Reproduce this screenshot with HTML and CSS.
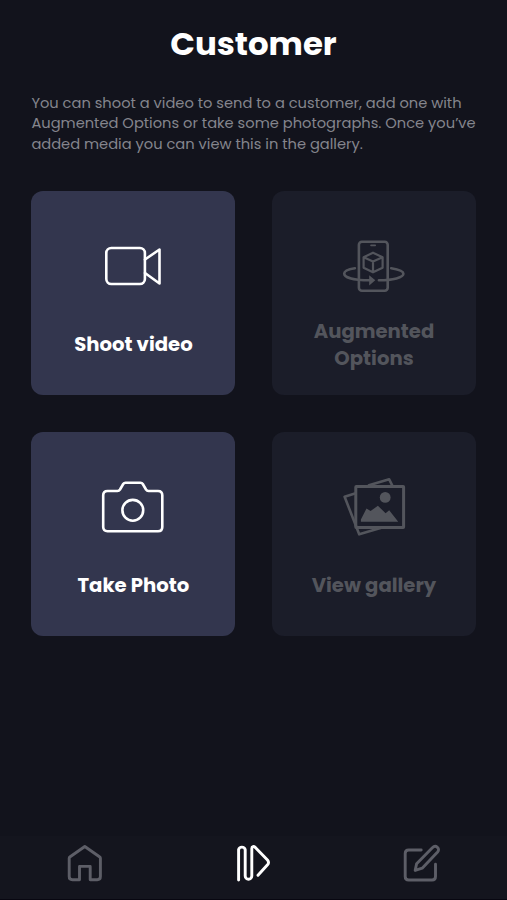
FILE: index.html
```html
<!DOCTYPE html>
<html lang="en">
<head>
  <meta charset="UTF-8">
  <title>Customer</title>
  <link rel="stylesheet" href="styles.css">
</head>
<body>
  <header>
    <h1>Customer</h1>
  </header>

  <main>
    <p class="intro">
      You can shoot a video to send to a customer, add one with<br>
      Augmented Options or take some photographs. Once you’ve<br>
      added media you can view this in the gallery.
    </p>

    <div class="grid">
      <button class="card">
        <svg class="icon" viewBox="0 0 72 72">
          <rect x="9.3" y="18" width="38.6" height="36" rx="5"/>
          <path d="M48 29.5 62.5 19.5V53.5L48 43"/>
        </svg>
        <span class="label">Shoot video</span>
      </button>

      <button class="card disabled">
        <svg class="icon" viewBox="0 0 72 72">
          <rect x="20.9" y="11.7" width="28.8" height="49" rx="3"/>
          <path d="M33 15.4H37.2" stroke-width="1.6"/>
          <path d="M35 22.7 44.6 27.3V37.7L35 42.3 25.6 37.7V27.3ZM25.6 27.3 35 31.5 44.6 27.3M35 31.5V42.3" stroke-width="2.2"/>
          <path d="M16.9 38.3C9 39.5 6.2 41.5 6.2 43.6 6.2 47.5 16 50.3 32 50.3"/>
          <path d="M53.2 38.3C61 39.5 65.4 41.3 65.4 43.8 65.4 47.5 55 50.3 40.9 50.3"/>
          <path class="solid" d="M31.2 45.2 37.3 50.3 31.2 55.5Z"/>
        </svg>
        <span class="label">Augmented<br>Options</span>
      </button>

      <button class="card">
        <svg class="icon" viewBox="0 0 72 72">
          <path d="M10.5 20H20.5Q22 20 23 18.5L26.2 13Q27 11.7 28.5 11.7H43.5Q45 11.7 45.8 13L49 18.5Q50 20 51.5 20H61Q65.3 20 65.3 24.3V56Q65.3 60.2 61 60.2H10.5Q6.2 60.2 6.2 56V24.3Q6.2 20 10.5 20Z"/>
          <circle cx="35.8" cy="39.3" r="10.4"/>
        </svg>
        <span class="label">Take Photo</span>
      </button>

      <button class="card disabled">
        <svg class="icon" viewBox="0 0 72 72">
          <rect x="17.8" y="15.4" width="47.8" height="41" rx="0.5" stroke-width="3"/>
          <path d="M30.9 14.2 51.2 8.3 54.2 14.3M16.9 22.5 6.6 25.7 21.2 63.3 42.5 57"/>
          <circle class="solid" cx="47.2" cy="26.4" r="5.4"/>
          <path class="solid" d="M22.9 50.7V48.5L28.5 37.5 32.6 40 39.9 34.7 47.6 42.3 51.2 39.2 60.2 50.7Z"/>
        </svg>
        <span class="label">View gallery</span>
      </button>
    </div>
  </main>

  <nav>
    <a class="tab">
      <svg viewBox="0 0 40 40">
        <path d="M20.8 3.5 5.8 14Q5.2 14.4 5.2 15.2V33.6Q5.2 36.8 8.4 36.8H15.5V23.4H26.2V36.8H33.2Q36.4 36.8 36.4 33.6V15.2Q36.4 14.4 35.8 14Z"/>
      </svg>
    </a>
    <a class="tab active">
      <svg viewBox="0 0 40 40">
        <path d="M5.6 37V6.7A3.4 3.4 0 0 1 12.2 6.7V33A3.3 3.3 0 0 0 18.8 33V5.5C18.8 3.2 20.8 3 22.3 4.4L34.5 17Q36.5 19.4 34.5 21.8L25 32.3"/>
      </svg>
    </a>
    <a class="tab">
      <svg viewBox="0 0 40 40">
        <path d="M19.2 7H6.7Q3.2 7 3.2 10.5V33.5Q3.2 37 6.7 37H30Q33.5 37 33.5 33.5V21.3"/>
        <path d="M13.2 27.4 14.6 20.8 30.6 4.6C32 3.1 34 3.1 35.4 4.3 36.9 5.6 36.9 7.5 35.6 9L20.2 25.2Z"/>
      </svg>
    </a>
  </nav>
</body>
</html>
```

FILE: styles.css
```css
:root {
  --bg: #12131c;
  --card: #33364e;
  --card-disabled: #1b1d29;
  --nav: #14151e;
  --muted: #84858d;
  --disabled: #53555c;
}

* {
  margin: 0;
  padding: 0;
  box-sizing: border-box;
  font-family: Poppins, Inter, sans-serif;
}

body {
  height: 900px;
  display: flex;
  flex-direction: column;
  background: var(--bg);
  color: #fff;
  overflow: hidden;
}

header {
  padding-top: 19px;
  text-align: center;
}
h1 {
  font-size: 32.4px;
  line-height: 49px;
  font-weight: 700;
}

main {
  flex: 1;
  padding: 25px 31px 0 31.4px;
}

.intro {
  font-size: 14.67px;
  line-height: 20.4px;
  color: var(--muted);
  white-space: nowrap;
}

.grid {
  display: grid;
  grid-template-columns: 204px 204px;
  grid-auto-rows: 204px;
  gap: 36.6px;
  margin-top: 36.8px;
}

.card {
  display: flex;
  flex-direction: column;
  align-items: center;
  padding-top: 39px;
  border: none;
  border-radius: 12px;
  background: var(--card);
  color: #fff;
}
.card.disabled {
  background: var(--card-disabled);
  color: var(--disabled);
}

svg {
  fill: none;
  stroke: currentColor;
  stroke-linecap: round;
  stroke-linejoin: round;
}
.icon {
  width: 72px;
  height: 72px;
  stroke-width: 2.6;
}
.solid {
  fill: currentColor;
  stroke-width: 0;
}

.label {
  height: 54px;
  margin-top: 15.5px;
  display: flex;
  align-items: center;
  font-size: 19.65px;
  line-height: 27px;
  font-weight: 700;
  white-space: nowrap;
}

nav {
  height: 64px;
  display: flex;
  align-items: center;
  padding: 0 1px 10px 0;
  background: var(--nav);
  border-bottom: 1px solid #080711;
}
.tab {
  flex: 1;
  display: flex;
  justify-content: center;
  color: #5d5e67;
}
.tab.active {
  color: #fff;
}
.tab svg {
  width: 40px;
  height: 40px;
  stroke-width: 2.9;
}
```
